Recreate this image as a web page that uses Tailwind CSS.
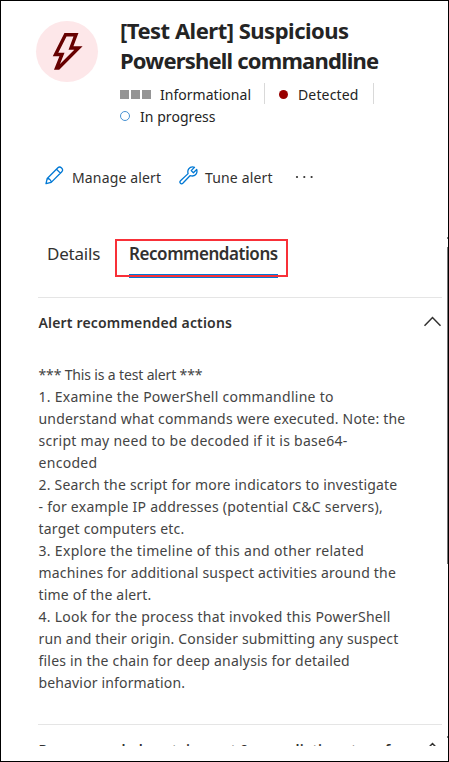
<!DOCTYPE html>
<html lang="en">
<head>
<meta charset="utf-8">
<title>Alert</title>
<script src="https://cdn.jsdelivr.net/npm/@tailwindcss/browser@4"></script>
</head>
<body>
<div class="relative flex h-[762px] w-[449px] flex-col overflow-hidden border border-black bg-white pl-[37px] font-['Noto_Sans','Open_Sans',sans-serif] text-[#323130]">
  <header class="flex h-[127px] shrink-0 pt-[14px] whitespace-nowrap">
    <div class="mt-[6px] -ml-[2px] h-[61px] w-[62px] shrink-0 overflow-hidden rounded-[50%] bg-[#fde7e9]">
      <svg class="size-[62px]" viewBox="0 0 62 62" fill="none" stroke="#660000" stroke-width="3.4"><path d="M29.500 13.700H40L35 27H42.500L22.500 47H20.500L26 33.500H19.500Z"/></svg>
    </div>
    <div class="ml-[22px] text-[#242424]">
      <h1 class="text-[22px] leading-[30px] font-bold"><span class="block w-max tracking-[-0.5px]">[Test Alert] Suspicious</span><span class="block w-max tracking-[-0.8px]">Powershell commandline</span></h1>
      <div class="mt-[8px] flex h-[22px] items-center text-[14px] leading-[22px]">
        <span class="mt-px flex gap-[2px]"><i class="size-[9px] bg-[#959595]"></i><i class="size-[9px] bg-[#959595]"></i><i class="size-[9px] bg-[#959595]"></i></span>
        <span class="mt-px ml-[9px] w-[104px] tracking-[0.03px]">Informational</span>
        <i class="-mt-px h-[21px] w-px bg-[#d9d9d9]"></i>
        <i class="ml-[14px] size-[9px] rounded-full bg-[#990000]"></i>
        <span class="mt-px ml-[10px] w-[75px] tracking-[0.15px]">Detected</span>
        <i class="-mt-px h-[21px] w-px bg-[#d9d9d9]"></i>
      </div>
      <div class="flex h-[22px] items-center text-[14px] leading-[22px]">
        <i class="-mt-px size-[10px] rounded-full border border-[#4791d2]"></i><span class="mt-[2px] ml-[10px] tracking-[0.05px]">In progress</span>
      </div>
    </div>
  </header>
  <nav class="mt-[37px] flex h-[24px] shrink-0 items-center pl-[7px] text-[14px] whitespace-nowrap">
    <svg class="-mt-[3px] size-[19px]" viewBox="0 0 19 19" fill="none" stroke="#0078d4" stroke-width="1.3" stroke-linejoin="round"><path d="M1 17.700L2.200 12.500L12.900 1.800C15.200-.5 19.100 3.300 16.800 5.700L6.200 16.400ZM11.500 3.200L15.400 7.100M2.200 12.500C4.200 12.300 6.300 14.500 6.200 16.400"/></svg>
    <span class="ml-[8px] w-[107px] tracking-[0.15px]">Manage alert</span>
    <svg class="-mt-[3px] size-[19px]" viewBox="0 0 19 19" fill="none" stroke="#0078d4" stroke-width="1.3" stroke-linejoin="round"><path d="M15.500 1.300L12.200 4.600L14.400 6.800L17.700 3.500C18.600 6.500 17 10 13.500 10Q12 10 11 9.700L3.800 17.300C2.300 18.800-.2 16.500 1.500 14.700L9.100 7.600C8 4.200 10.400.800 13.500.800Q14.600.800 15.500 1.300Z"/></svg>
    <span class="ml-[7px] w-[90px] tracking-[0.15px]">Tune alert</span>
    <svg class="-mt-px h-[4px] w-[19px]" viewBox="0 0 19 4" fill="#323130"><circle cx="2" cy="2" r="1.100"/><circle cx="9.300" cy="2" r="1.100"/><circle cx="16.600" cy="2" r="1.100"/></svg>
  </nav>
  <div class="mt-[49px] flex h-[40px] shrink-0 pl-[10px] text-[17px] leading-[32px] whitespace-nowrap">
    <span class="-ml-px w-[82px] tracking-[-0.2px]">Details</span>
    <span class="relative w-[149px] border-b-[4px] border-[#0078d4] font-semibold"><span class="block w-max tracking-[-0.44px]">Recommendations</span><i class="absolute top-px -left-[14px] h-[38px] w-[173px] border-2 border-[#f83038]"></i></span>
  </div>
  <section class="mt-[19px] mr-[6px] h-[427px] shrink-0 border-t border-[#e5e5e5]">
    <div class="flex h-[50px] items-center justify-between text-[14px] font-semibold whitespace-nowrap"><h2 class="-mt-px ml-[0.5px] tracking-[0.17px]">Alert recommended actions</h2>
      <svg class="-mt-[3px] h-[11px] w-[19px]" viewBox="0 0 19 11" fill="none" stroke="#323130" stroke-width="1.500"><path d="M1.500 9.800L9.500 1.500L17.500 9.800"/></svg>
    </div>
    <div class="mt-[16px] pl-[0.5px] text-[14px] leading-[22px] whitespace-nowrap text-[#444]">
      <span class="block w-max tracking-[-0.15px]">*** This is a test alert ***</span>
      <span class="block w-max tracking-[0.27px]">1. Examine the PowerShell commandline to</span>
      <span class="block w-max tracking-[0.2px]">understand what commands were executed. Note: the</span>
      <span class="block w-max tracking-[0.28px]">script may need to be decoded if it is base64-</span>
      <span class="block w-max tracking-[0.3px]">encoded</span>
      <span class="block w-max tracking-[0.2px]">2. Search the script for more indicators to investigate</span>
      <span class="block w-max tracking-[0.25px]">- for example IP addresses (potential C&amp;C servers),</span>
      <span class="block w-max tracking-[0.2px]">target computers etc.</span>
      <span class="block w-max tracking-[0.32px]">3. Explore the timeline of this and other related</span>
      <span class="block w-max tracking-[0.2px]">machines for additional suspect activities around the</span>
      <span class="block w-max tracking-[0.2px]">time of the alert.</span>
      <span class="block w-max tracking-[0.25px]">4. Look for the process that invoked this PowerShell</span>
      <span class="block w-max tracking-[0.16px]">run and their origin. Consider submitting any suspect</span>
      <span class="block w-max tracking-[0.2px]">files in the chain for deep analysis for detailed</span>
      <span class="block w-max tracking-[0.15px]">behavior information.</span>
    </div>
  </section>
  <section class="mr-[6px] h-[22px] shrink-0 overflow-hidden border-t border-[#e5e5e5]">
    <div class="flex justify-between pt-[15px] text-[14px] leading-[20px] font-semibold whitespace-nowrap"><h2 class="ml-[0.5px] tracking-[0.17px]">Recommended containment &amp; remediation steps for</h2>
      <svg class="mt-[2px] h-[11px] w-[19px]" viewBox="0 0 19 11" fill="none" stroke="#323130" stroke-width="1.500"><path d="M1.500 9.800L9.500 1.500L17.500 9.800"/></svg>
    </div>
  </section>
  <i class="absolute top-[246px] right-0 h-[317px] w-px bg-[#777]"></i>
  <i class="absolute top-[236px] right-0 h-[2px] w-px bg-[#777]"></i>
  <i class="absolute top-[735px] right-0 h-[2px] w-px bg-[#777]"></i>
</div>
</body>
</html>
